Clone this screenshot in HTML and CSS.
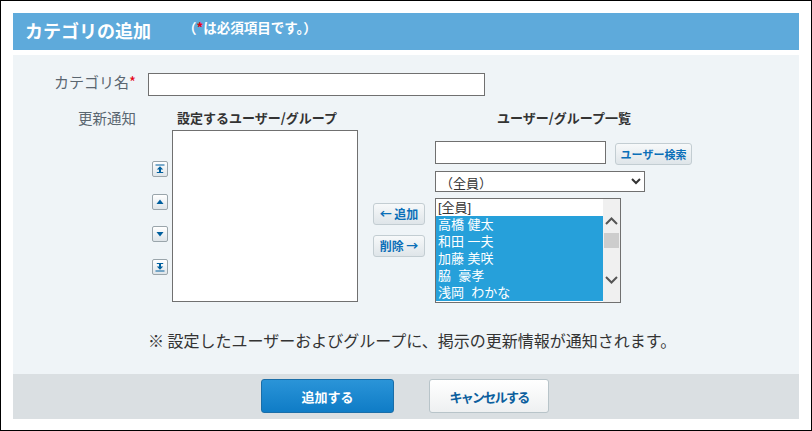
FILE: index.html
```html
<!DOCTYPE html>
<html lang="ja">
<head>
<meta charset="utf-8">
<title>カテゴリの追加</title>
<link rel="stylesheet" href="styles.css">
</head>
<body>
<div class="frame">
  <header class="head">
    <h1 class="title">カテゴリの追加</h1>
    <p class="note">（<span class="req">*</span>は必須項目です。）</p>
  </header>
  <main class="body">
    <div class="row-name">
      <label class="label name-label">カテゴリ名<span class="req">*</span></label>
      <input class="text name-input" type="text">
    </div>
    <div class="row-notify">
      <div class="label notify-label">更新通知</div>
      <div class="order">
        <button class="mini" aria-label="先頭へ"><svg viewBox="0 0 10 10" width="10" height="10"><path d="M.5 .5h9v1h-9zM5 2.200 1.800 5.500H4V8H1.800v1h6.400V8H6V5.500h2.200z" fill="#005f9e"/></svg></button>
        <button class="mini" aria-label="上へ"><svg viewBox="0 0 10 10" width="10" height="10"><path d="M5 2.500 1.500 7h7z" fill="#005f9e"/></svg></button>
        <button class="mini" aria-label="下へ"><svg viewBox="0 0 10 10" width="10" height="10"><path d="M5 7.500 1.500 3h7z" fill="#005f9e"/></svg></button>
        <button class="mini" aria-label="末尾へ"><svg viewBox="0 0 10 10" width="10" height="10"><path d="M.5 8.500h9v1h-9zM5 7.800 1.800 4.500H4V2H1.800V1h6.400v1H6v2.500h2.200z" fill="#005f9e"/></svg></button>
      </div>
      <div class="col-left">
        <div class="col-title">設定するユーザー/グループ</div>
        <div class="listbox"></div>
      </div>
      <div class="move">
        <button class="btn">← 追加</button>
        <button class="btn">削除 →</button>
      </div>
      <div class="col-right">
        <div class="col-title">ユーザー/グループ一覧</div>
        <div class="search">
          <input class="text search-input" type="text">
          <button class="btn">ユーザー検索</button>
        </div>
        <select class="group"><option>（全員）</option></select>
        <div class="userlist">
          <ul class="users">
            <li>[全員]</li>
            <li class="sel">高橋&nbsp;健太</li>
            <li class="sel">和田&nbsp;一夫</li>
            <li class="sel">加藤&nbsp;美咲</li>
            <li class="sel">脇&nbsp; 豪孝</li>
            <li class="sel">浅岡&nbsp; わかな</li>
          </ul>
          <div class="scroll">
            <svg viewBox="0 0 15 10" width="15" height="10"><path d="M2 8 7.500 2.500 13 8" fill="none" stroke="#555" stroke-width="2"/></svg>
            <div class="thumb"></div>
            <svg class="down" viewBox="0 0 15 10" width="15" height="10"><path d="M2 2 7.500 7.500 13 2" fill="none" stroke="#555" stroke-width="2"/></svg>
          </div>
        </div>
      </div>
    </div>
    <p class="info">※ 設定したユーザーおよびグループに、掲示の更新情報が通知されます。</p>
  </main>
  <footer class="foot">
    <button class="action primary">追加する</button>
    <button class="action cancel">キャンセルする</button>
  </footer>
</div>
</body>
</html>
```
FILE: styles.css
```css
* { box-sizing: border-box; }
html, body { margin: 0; background: #fff; }
body, button, input, select {
  font-family: "Noto Sans CJK JP", "Noto Sans", sans-serif;
}
.frame {
  width: 812px;
  height: 431px;
  border: 1px solid #000;
  padding: 12px 12px 0;
  background: #fff;
  overflow: hidden;
}
.head {
  height: 37px;
  background: #5eaadb;
  color: #fff;
  display: flex;
  align-items: flex-start;
  padding-left: 12px;
}
.title {
  margin: 4px 0 0;
  font-size: 18px;
  line-height: 26px;
  font-weight: 700;
  width: 162px;
}
.note {
  margin: 5px 0 0 -4px;
  font-size: 13.500px;
  line-height: 18px;
  font-weight: 700;
}
.req { color: #e60012; }
.body {
  margin-top: 5px;
  height: 319px;
  background: #eff4f7;
  display: flex;
  flex-direction: column;
}
.label { color: #5a6670; font-size: 14.500px; line-height: 18px; }
.row-name {
  display: flex;
  align-items: center;
  margin-top: 18px;
  height: 23px;
}
.name-label { width: 123px; text-align: right; font-size: 15px; margin-bottom: 5px; }
.text {
  background: #fff;
  border: 1px solid #707070;
  border-radius: 0;
  padding: 0;
}
.name-input { width: 337px; height: 23px; margin-left: 12px; }
.row-notify {
  display: flex;
  align-items: flex-start;
  margin-top: 13px;
}
.notify-label { width: 123px; text-align: right; }
.order {
  display: flex;
  flex-direction: column;
  gap: 16.600px;
  width: 16px;
  margin: 52px 0 0 16px;
}
.mini {
  width: 16px;
  height: 16px;
  padding: 0;
  display: flex;
  align-items: center;
  justify-content: center;
  background: linear-gradient(#fff, #dfe5e9);
  border: 1px solid #9aa5ab;
  border-radius: 2px;
}
.col-left { width: 186px; margin-left: 4px; }
.col-title {
  font-size: 13px;
  line-height: 18px;
  font-weight: 700;
  color: #333;
  margin-bottom: 3px;
}
.col-left .col-title { padding-left: 5px; white-space: nowrap; }
.listbox {
  width: 186px;
  height: 172px;
  background: #fff;
  border: 1px solid #707070;
}
.move {
  display: flex;
  flex-direction: column;
  gap: 10px;
  margin: 94px 0 0 15px;
  width: 52px;
}
.btn {
  height: 22px;
  padding: 0;
  font-size: 12px;
  line-height: 18px;
  font-weight: 700;
  color: #0b6fb8;
  background: linear-gradient(#f7f9fa, #dfe5e9);
  border: 1px solid #c3cdd2;
  border-radius: 3px;
  white-space: nowrap;
}
.col-right { width: 258px; margin-left: 10px; }
.col-right .col-title { margin-bottom: 13px; text-align: center; }
.search { display: flex; align-items: center; gap: 9px; }
.search-input { width: 171px; height: 23px; }
.search .btn { width: 77px; height: 22px; margin-top: 3px; font-size: 11px; }
.group {
  display: block;
  width: 210px;
  height: 21px;
  margin-top: 6px;
  padding: 0;
  font-size: 13px;
  color: #333;
  background: #fff;
  border: 1px solid #707070;
  border-radius: 0;
}
.userlist {
  display: flex;
  width: 186px;
  height: 105px;
  margin-top: 6px;
  background: #fff;
  border: 1px solid #707070;
}
.users {
  list-style: none;
  margin: 0;
  padding: 0;
  flex: 1;
  font-family: "Liberation Sans", "Noto Sans CJK JP", sans-serif;
  font-size: 13px;
  line-height: 17px;
  color: #333;
  overflow: hidden;
}
.users li { height: 17px; padding-left: 2px; white-space: nowrap; }
.users li.sel { background: #26a0da; color: #fff; }
.scroll {
  width: 17px;
  background: #f0f0f0;
  display: flex;
  flex-direction: column;
  padding: 17px 1px 0;
  align-items: center;
}
.thumb { width: 15px; height: 15px; margin-top: 7px; background: #cdcdcd; }
.down { margin-top: 27px; }
.info {
  margin: 26px 0 0 135px;
  font-size: 16px;
  line-height: 22px;
  color: #333;
  white-space: nowrap;
}
.foot {
  height: 45px;
  background: #dadfe2;
  display: flex;
  align-items: flex-start;
  padding: 5px 0 0 248px;
  gap: 35px;
}
.action {
  height: 34px;
  font-size: 13px;
  font-weight: 700;
  border-radius: 3px;
  padding: 0;
}
.primary {
  width: 133px;
  color: #fff;
  background: linear-gradient(#2a94d8, #0f7cc6);
  border: 1px solid #1a6ea8;
}
.cancel {
  width: 120px;
  color: #0b5f9e;
  letter-spacing: -1.700px;
  background: linear-gradient(#fff, #eef0f1);
  border: 1px solid #b8c4c9;
}
```
